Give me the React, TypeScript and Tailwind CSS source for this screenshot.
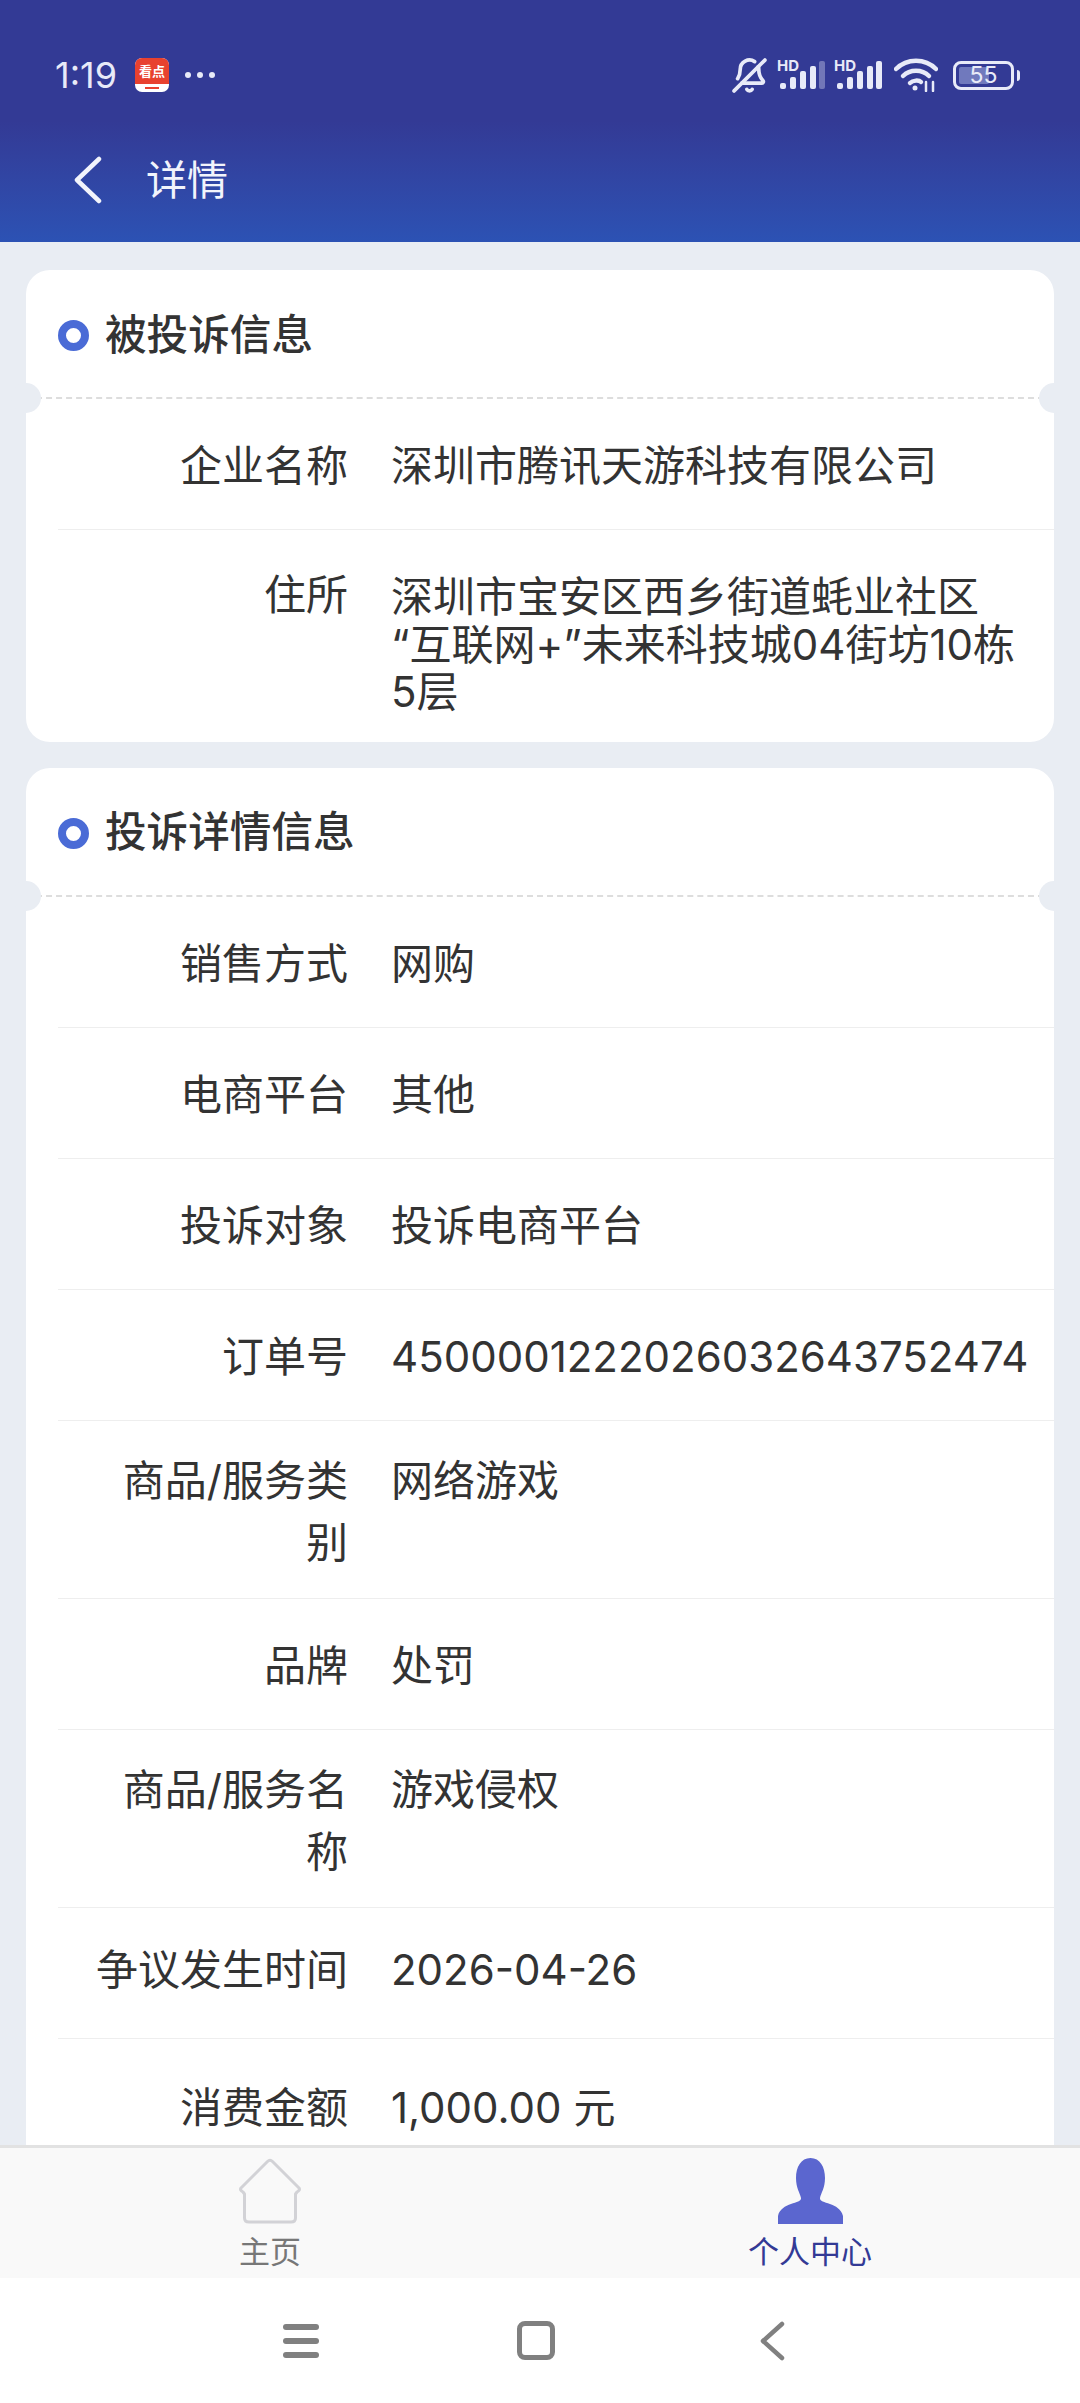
import { BellOff } from 'lucide-react';

const SignalIcon = ({ dim }: { dim?: boolean }) => (
  <svg className="mb-[4px]" width="48" height="34" viewBox="0 0 48 34">
    <text x="0" y="15" fontSize="15" fontWeight="700" fill="#e8eaf8" fontFamily="Inter, sans-serif">HD</text>
    <rect x="3" y="27" width="6" height="6" rx="2" fill="#e8eaf8" />
    <rect x="13" y="21" width="6" height="12" rx="2" fill="#e8eaf8" />
    <rect x="23" y="15" width="6" height="18" rx="2" fill="#e8eaf8" />
    <rect x="33" y="10" width="6" height="23" rx="2" fill="#e8eaf8" />
    <rect x="42" y="5" width="6" height="28" rx="2" fill="#e8eaf8" fillOpacity={dim ? 0.35 : 1} />
  </svg>
);

const WifiIcon = () => (
  <svg width="44" height="34" viewBox="0 0 44 34" fill="none" stroke="#e8eaf8" strokeWidth="4.5" strokeLinecap="round">
    <path d="M2 11C13 0 31 0 42 11" />
    <path d="M9 18C16 11 28 11 35 18" />
    <path d="M16 25C19 22 25 22 27 24" />
    <circle cx="21" cy="30" r="2.5" fill="#e8eaf8" stroke="none" />
    <path d="M32 24V33M39 24V33" strokeWidth="2.5" />
  </svg>
);

const Battery = () => (
  <div className="flex items-center gap-[3px]">
    <div className="relative flex h-[29px] w-[61px] items-center rounded-[8px] border-[3px] border-[#e8eaf8] p-[3px]">
      <div className="h-full w-[30px] rounded-[2px] bg-[#7079bd]" />
      <span className="absolute inset-0 flex items-center justify-center text-[23px] leading-none text-[#e8eaf8]">55</span>
    </div>
    <div className="h-[11px] w-[3px] rounded-r-full bg-[#e8eaf8]" />
  </div>
);

const StatusBar = () => (
  <div className="flex h-[150px] items-center justify-between pl-[55px] pr-[60px]">
    <div className="flex items-center">
      <span className="text-[36px] leading-none text-[#e8eaf8]">1:19</span>
      <div className="ml-[18px] flex h-[34px] w-[34px] flex-col items-center overflow-hidden rounded-[7px] bg-white">
        <div className="flex h-[26px] w-full items-center justify-center bg-[#e8412f] text-[13px] font-bold leading-none text-white">看点</div>
        <div className="mt-[3px] h-[2px] w-[14px] bg-[#e8412f]" />
      </div>
      <div className="ml-[16px] flex gap-[6px]">
        <div className="h-[6px] w-[6px] rounded-full bg-[#e8eaf8]" />
        <div className="h-[6px] w-[6px] rounded-full bg-[#e8eaf8]" />
        <div className="h-[6px] w-[6px] rounded-full bg-[#e8eaf8]" />
      </div>
    </div>
    <div className="flex items-center">
      <BellOff className="-scale-x-100" size={37} color="#e8eaf8" strokeWidth={2.4} />
      <div className="ml-[9px]"><SignalIcon dim /></div>
      <div className="ml-[9px]"><SignalIcon /></div>
      <div className="ml-[12px]"><WifiIcon /></div>
      <div className="ml-[15px]"><Battery /></div>
    </div>
  </div>
);

const Header = () => (
  <header className="h-[242px] shrink-0 bg-gradient-to-b from-[#333a95] via-[#333a95] via-50% to-[#2c52b4]">
    <StatusBar />
    <div className="flex items-center pl-[74px]">
      <svg width="28" height="48" viewBox="0 0 28 48" fill="none" stroke="#f2f4fc" strokeWidth="4.5" strokeLinecap="round" strokeLinejoin="round">
        <path d="M25 3L3 24L25 45" />
      </svg>
      <span className="ml-[44px] text-[41px] leading-[60px] text-[#f2f4fc]">详情</span>
    </div>
  </header>
);

const CardTitle = ({ title }: { title: string }) => (
  <div className="relative flex h-[129px] items-center border-b-2 border-dashed border-[#dddddd] pl-[32px] pt-[4px]">
    <div className="h-[31px] w-[31px] rounded-full border-[8px] border-[#4a6bd6] bg-white" />
    <span className="ml-[16px] text-[41.6px] font-medium leading-none text-[#333333]">{title}</span>
    <div className="absolute -bottom-[16px] -left-[15px] h-[30px] w-[30px] rounded-full bg-[#e9edf3]" />
    <div className="absolute -bottom-[16px] -right-[15px] h-[30px] w-[30px] rounded-full bg-[#e9edf3]" />
  </div>
);

type RowProps = { label: string; value: string; tall?: boolean; last?: boolean; pad?: string };

const Row = ({ label, value, tall, last, pad = 'pt-[4px]' }: RowProps) => {
  const multi = value.includes('\n');
  return (
    <div className={`ml-[32px] flex ${last ? '' : 'border-b border-[#eeeeee]'} ${tall ? 'h-[178px] pt-[29px]' : multi ? `pb-[26px] pt-[34px]` : `h-[131px] items-center ${pad}`}`}>
      <div className="ml-[36px] w-[254px] shrink-0 text-right text-[42px] leading-[62px] text-[#333333]">{label}</div>
      <div className={`ml-[43px] min-w-0 flex-1 whitespace-pre-line text-[42px] text-[#333333] ${multi ? 'pt-[9px] leading-[47.5px]' : 'leading-[62px]'}`}>{value}</div>
    </div>
  );
};

const Card = ({ children }: { children: React.ReactNode }) => (
  <section className="mx-[26px] mb-[26px] rounded-[24px] bg-white">{children}</section>
);

const TabBar = () => (
  <div className="flex h-[133px] shrink-0 border-t-[3px] border-[#e2e2e2] bg-[#f9f9f9]">
    <div className="flex w-1/2 flex-col items-center pt-[10px]">
      <svg width="64" height="66" viewBox="0 0 64 66" fill="none" stroke="#d2d2d6" strokeWidth="3" strokeLinejoin="round">
        <path d="M29.5 3.5Q32 1 34.5 3.5L61 30Q62.5 32 59 34L57.5 36V60Q57.5 64 53 64H11Q6.5 64 6.5 60V36L5 34Q1.5 32 3 30Z" />
      </svg>
      <span className="mt-[10px] text-[31px] leading-[36px] text-[#777777]">主页</span>
    </div>
    <div className="flex w-1/2 flex-col items-center pt-[10px]">
      <svg width="65" height="66" viewBox="0 0 65 66" fill="#5b66cf">
        <path d="M32.5 0C42 0 47 9 47 20C47 30 43 35 42 40C41 46 62 44 65 58V66H0V58C3 44 24 46 23 40C22 35 18 30 18 20C18 9 23 0 32.5 0Z" />
      </svg>
      <span className="mt-[10px] text-[31px] leading-[36px] text-[#333a95]">个人中心</span>
    </div>
  </div>
);

const NavBar = () => (
  <div className="h-[125px] shrink-0 bg-white">
    <div className="flex h-full items-center justify-center gap-[198px] pr-[12px]">
      <div className="flex w-[36px] flex-col gap-[8px]">
        <div className="h-[6px] rounded-full bg-[#808080]" />
        <div className="h-[6px] rounded-full bg-[#808080]" />
        <div className="h-[6px] rounded-full bg-[#808080]" />
      </div>
      <div className="h-[39px] w-[38px] rounded-[8px] border-[5px] border-[#808080]" />
      <svg className="ml-[6px]" width="26" height="40" viewBox="0 0 26 40" fill="none" stroke="#808080" strokeWidth="4.5" strokeLinecap="round" strokeLinejoin="round">
        <path d="M23 3L4 20L23 37" />
      </svg>
    </div>
  </div>
);

export default function App() {
  return (
    <div className="flex h-[2403px] w-[1080px] flex-col overflow-hidden bg-[#e9edf3] font-['Inter','Noto_Sans_CJK_SC',sans-serif]">
      <Header />
      <main className="min-h-0 flex-1 overflow-hidden pt-[28px]">
        <Card>
          <CardTitle title="被投诉信息" />
          <Row label="企业名称" value="深圳市腾讯天游科技有限公司" />
          <Row label="住所" value={'深圳市宝安区西乡街道蚝业社区\n“互联网+”未来科技城04街坊10栋\n5层'} last />
        </Card>
        <Card>
          <CardTitle title="投诉详情信息" />
          <Row label="销售方式" value="网购" />
          <Row label="电商平台" value="其他" />
          <Row label="投诉对象" value="投诉电商平台" />
          <Row label="订单号" value="4500001222026032643752474" />
          <Row label="商品/服务类别" value="网络游戏" tall />
          <Row label="品牌" value="处罚" />
          <Row label="商品/服务名称" value="游戏侵权" tall />
          <Row label="争议发生时间" value="2026-04-26" pad="pb-[6px]" />
          <Row label="消费金额" value="1,000.00 元" pad="pt-[8px]" />
        </Card>
      </main>
      <TabBar />
      <NavBar />
    </div>
  );
}
